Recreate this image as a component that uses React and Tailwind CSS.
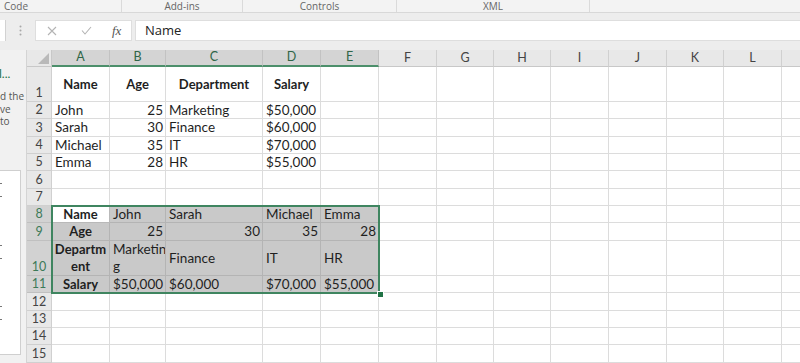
import React from 'react'

const COLS = [
  { k: 'A', w: 'w-[58px]' },
  { k: 'B', w: 'w-[56px]' },
  { k: 'C', w: 'w-[97px]' },
  { k: 'D', w: 'w-[58px]' },
  { k: 'E', w: 'w-[58px]' },
  { k: 'F', w: 'w-[58px]' },
  { k: 'G', w: 'w-[57px]' },
  { k: 'H', w: 'w-[57px]' },
  { k: 'I', w: 'w-[58px]' },
  { k: 'J', w: 'w-[58px]' },
  { k: 'K', w: 'w-[57px]' },
  { k: 'L', w: 'w-[58px]' },
  { k: 'M', w: 'w-[58px]', hide: true },
]

const SEL_COLS = ['A', 'B', 'C', 'D', 'E']

// [text, align, bold]
const ROWS = [
  { n: 1, h: 'h-[35px]', cells: { A: ['Name', 'c', true], B: ['Age', 'c', true], C: ['Department', 'c', true], D: ['Salary', 'c', true] } },
  { n: 2, h: 'h-[17px]', cells: { A: ['John', 'l'], B: ['25', 'r'], C: ['Marketing', 'l'], D: ['$50,000', 'l'] } },
  { n: 3, h: 'h-[18px]', cells: { A: ['Sarah', 'l'], B: ['30', 'r'], C: ['Finance', 'l'], D: ['$60,000', 'l'] } },
  { n: 4, h: 'h-[17px]', cells: { A: ['Michael', 'l'], B: ['35', 'r'], C: ['IT', 'l'], D: ['$70,000', 'l'] } },
  { n: 5, h: 'h-[17px]', cells: { A: ['Emma', 'l'], B: ['28', 'r'], C: ['HR', 'l'], D: ['$55,000', 'l'] } },
  { n: 6, h: 'h-[18px]', cells: {} },
  { n: 7, h: 'h-[17px]', cells: {} },
  { n: 8, h: 'h-[17px]', sel: true, cells: { A: ['Name', 'c', true], B: ['John', 'l'], C: ['Sarah', 'l'], D: ['Michael', 'l'], E: ['Emma', 'l'] } },
  { n: 9, h: 'h-[18px]', sel: true, cells: { A: ['Age', 'c', true], B: ['25', 'r'], C: ['30', 'r'], D: ['35', 'r'], E: ['28', 'r'] } },
  { n: 10, h: 'h-[35px]', sel: true, cells: { A: ['Departm\nent', 'c', true], B: ['Marketin\ng', 'l'], C: ['Finance', 'l'], D: ['IT', 'l'], E: ['HR', 'l'] } },
  { n: 11, h: 'h-[17px]', sel: true, cells: { A: ['Salary', 'c', true], B: ['$50,000', 'l'], C: ['$60,000', 'l'], D: ['$70,000', 'l'], E: ['$55,000', 'l'] } },
  { n: 12, h: 'h-[18px]', cells: {} },
  { n: 13, h: 'h-[17px]', cells: {} },
  { n: 14, h: 'h-[17px]', cells: {} },
  { n: 15, h: 'h-[18px]', cells: {} },
]

const ALIGN = {
  l: 'justify-start pl-[3px]',
  r: 'justify-end pr-[2px]',
  c: 'justify-center',
}

function Cell({ col, row }) {
  const data = row.cells[col.k]
  const inSel = row.sel && SEL_COLS.includes(col.k)
  const active = inSel && col.k === 'A' && row.n === 8
  const bg = active ? 'bg-white border-[#b9b9b9]' : inSel ? 'bg-[#c9c9c9] border-[#b4b4b4]' : 'bg-white border-[#dcdcdc]'
  return (
    <div className={`${col.w} shrink-0 h-full border-r border-b ${bg} flex items-center overflow-hidden ${data ? ALIGN[data[1]] : ''}`}>
      {data && (
        <span
          className={`whitespace-pre-line leading-[17px] text-[#1f1f1f] ${
            data[2] ? 'font-bold text-center text-[13px]' : 'text-[13.5px]'
          }`}
        >
          {data[0]}
        </span>
      )}
    </div>
  )
}

function Ribbon() {
  const groups = [
    { label: 'Code', w: 'w-[122px]', align: 'justify-start pl-[4px]' },
    { label: 'Add-ins', w: 'w-[121px]', align: 'justify-center' },
    { label: 'Controls', w: 'w-[154px]', align: 'justify-center' },
    { label: 'XML', w: 'w-[193px]', align: 'justify-center' },
  ]
  return (
    <div className="h-[13px] flex bg-[#f3f3f3] border-b border-[#d8d8d8] overflow-hidden shrink-0">
      {groups.map((g) => (
        <div key={g.label} className={`${g.w} shrink-0 flex items-start ${g.align} border-r border-[#dadada] h-full`}>
          <span className="text-[10px] leading-[12px] text-[#666] font-['Open_Sans',sans-serif]">{g.label}</span>
        </div>
      ))}
    </div>
  )
}

function FormulaBar() {
  return (
    <div className="h-[37px] shrink-0 flex items-start pt-[7px] bg-[#ededed]">
      <div className="w-[6px] h-[21px] bg-white border-r border-[#d2d2d2]" />
      <div className="w-[29px] h-[21px] flex items-center justify-center">
        <svg width="3" height="11" viewBox="0 0 3 11">
          <circle cx="1.5" cy="1.5" r="1" fill="#a8a8a8" />
          <circle cx="1.5" cy="5.5" r="1" fill="#a8a8a8" />
          <circle cx="1.5" cy="9.5" r="1" fill="#a8a8a8" />
        </svg>
      </div>
      <div className="w-[97px] h-[21px] bg-white border border-[#dedede] flex items-center">
        <svg className="ml-[11px]" width="10" height="10" viewBox="0 0 10 10">
          <path d="M1 1 L9 9 M9 1 L1 9" stroke="#b4b4b4" strokeWidth="1.1" fill="none" />
        </svg>
        <svg className="ml-[24px]" width="11" height="9" viewBox="0 0 11 9">
          <path d="M1 4.5 L4 8 L10 1" stroke="#b4b4b4" strokeWidth="1.1" fill="none" />
        </svg>
        <span className="ml-[20px] text-[13px] italic text-[#555] font-['Liberation_Serif',serif]">fx</span>
      </div>
      <div className="ml-[3px] flex-1 h-[21px] bg-white border-y border-l border-[#dedede] flex items-center pl-[9px]">
        <span className="text-[13px] text-[#222] font-['Open_Sans',sans-serif]">Name</span>
      </div>
    </div>
  )
}

function LeftPane() {
  return (
    <div className="w-[27px] shrink-0 bg-[#f1f1f1] border-r border-[#d4d4d4] overflow-hidden flex flex-col">
      <div className="h-[17px]" />
      <span className="mt-[1px] text-[12px] leading-[12px] text-[#217346] whitespace-nowrap -ml-[1px]">l...</span>
      <div className="mt-[10px] flex flex-col text-[10px] leading-[12.5px] text-[#555] whitespace-nowrap font-['Open_Sans',sans-serif]">
        <span>d the</span>
        <span>ve</span>
        <span>to</span>
      </div>
      <div className="mt-[42px] w-[22px] h-[185px] bg-white border border-[#cfcfcf] -ml-[1px] flex flex-col pt-[12px]">
        <span className="block w-[2px] h-[1px] bg-[#777]" />
        <span className="block mt-[12px] w-[2px] h-[1px] bg-[#777]" />
        <span className="block mt-[48px] w-[2px] h-[1px] bg-[#777]" />
        <span className="block mt-[12px] w-[2px] h-[1px] bg-[#777]" />
        <span className="block mt-[47px] w-[2px] h-[1px] bg-[#777]" />
        <span className="block mt-[12px] w-[2px] h-[1px] bg-[#777]" />
      </div>
    </div>
  )
}

function Grid() {
  return (
    <div className="relative flex-1 overflow-hidden bg-white">
      {/* column header */}
      <div className="flex h-[17px]">
        <div className="w-[25px] shrink-0 h-full bg-[#e8e8e8] border-r border-b border-[#c8c8c8] flex items-end justify-end">
          <svg width="11" height="11" viewBox="0 0 11 11" className="mr-[2px] mb-[2px]">
            <polygon points="11,0 11,11 0,11" fill="#b9b9b9" />
          </svg>
        </div>
        {COLS.map((c) => {
          const sel = SEL_COLS.includes(c.k)
          return (
            <div
              key={c.k}
              className={`${c.w} shrink-0 h-full flex items-center justify-center border-r text-[12.5px] ${
                sel
                  ? 'bg-[#d4d4d4] border-[#c2c2c2] border-b-2 border-b-[#4c8f6b] text-[#2f6547]'
                  : 'bg-[#e8e8e8] border-[#d0d0d0] border-b border-b-[#c8c8c8] text-[#444]'
              }`}
            >
              {c.hide ? null : c.k}
            </div>
          )
        })}
      </div>

      {ROWS.map((r) => (
        <div key={r.n} className={`flex ${r.h}`}>
          <div
            className={`w-[25px] shrink-0 h-full flex items-end justify-center border-r border-b text-[12.5px] leading-[16px] ${
              r.sel ? 'bg-[#d2d2d2] border-[#c0c0c0] text-[#3c7a58]' : 'bg-[#e8e8e8] border-[#d0d0d0] text-[#444]'
            }`}
          >
            {r.n}
          </div>
          {COLS.map((c) => (
            <Cell key={c.k} col={c} row={r} />
          ))}
        </div>
      ))}

      {/* selection range A8:E11 */}
      <div className="absolute left-[24px] top-[155px] w-[329px] h-[89px] border-2 border-[#3f8560] pointer-events-none" />
      <div className="absolute left-[350px] top-[241px] w-[5px] h-[5px] bg-[#217346] border border-white box-content" />
    </div>
  )
}

export default function App() {
  return (
    <div className="w-[800px] h-[363px] overflow-hidden bg-[#ededed] flex flex-col font-['Lato',sans-serif]">
      <Ribbon />
      <FormulaBar />
      <div className="flex flex-1 overflow-hidden">
        <LeftPane />
        <Grid />
      </div>
    </div>
  )
}
